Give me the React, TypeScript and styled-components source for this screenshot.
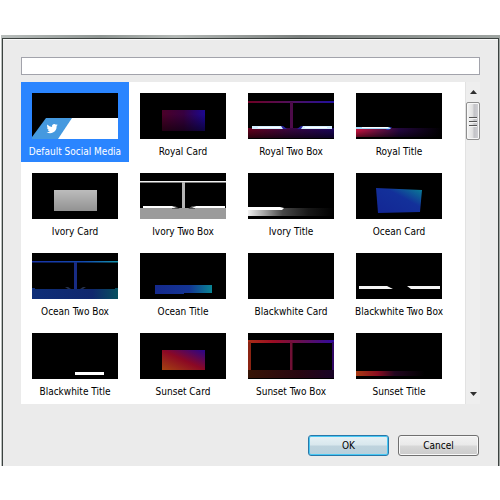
import React, { useState } from "react";
import styled, { createGlobalStyle } from "styled-components";

const GlobalStyle = createGlobalStyle`
  *, *::before, *::after { box-sizing: border-box; }
  body {
    margin: 0;
    background: #fff;
    color: #000;
    font: 10px/14px "DejaVu Sans Condensed", "Noto Sans", sans-serif;
  }
  button, input { font: inherit; color: inherit; }
`;

const Page = styled.main`
  padding: 35px 0 0 1px;
`;

const Frame = styled.div`
  padding: 3px 1px 0;
  background: linear-gradient(90deg, #b9bebc, #8f9693 20%, #b4b9b6 35%, #7b807e 60%, #9fa5a2);
`;

const Dialog = styled.form`
  display: flex;
  flex-direction: column;
  padding: 18px 18px 10px;
  border: solid #3c4240;
  border-width: 1px 1px 0;
  box-shadow: inset 0 1px #fafafa;
  background: #ebebeb;
`;

const SearchBox = styled.input`
  width: 100%;
  height: 18px;
  padding: 0 4px;
  border: 1px solid #a2a3ab;
  border-radius: 0;
  outline: none;
  background: #fff;
`;

const ListPane = styled.div`
  display: flex;
  margin-top: 7px;
  height: 322px;
`;

const TemplateGrid = styled.ul`
  flex: 1;
  display: grid;
  grid-template-columns: repeat(auto-fill, 108px);
  grid-auto-rows: 80px;
  align-content: start;
  margin: 0;
  padding: 0;
  overflow: hidden;
  list-style: none;
  background: #fff;
`;

const TemplateButton = styled.button<{ $selected: boolean }>`
  display: flex;
  flex-direction: column;
  align-items: center;
  gap: 6px;
  width: 108px;
  height: 80px;
  padding: 11px 0 0;
  border: 0;
  white-space: nowrap;
  background: ${(p) => (p.$selected ? "#2a85ff" : "transparent")};
  color: ${(p) => (p.$selected ? "#fff" : "#000")};
`;

const Preview = styled.svg`
  display: block;
  flex: none;
  width: 86px;
  height: 46px;
  background: #000;
`;

const ScrollBar = styled.div`
  display: flex;
  flex-direction: column;
  width: 15px;
  border-left: 1px solid #e2e2e2;
  background: #eeeeee;
`;

const ArrowButton = styled.button`
  display: grid;
  place-items: center;
  height: 20px;
  padding: 0;
  border: 0;
  background: transparent;
`;

const ScrollTrack = styled.div`
  flex: 1;
`;

const ScrollThumb = styled.div`
  display: grid;
  place-items: center;
  height: 38px;
  border: 1px solid #8f8f8f;
  border-radius: 2px;
  box-shadow: inset 0 0 0 1px #f8f8f8;
  background: linear-gradient(90deg, #f4f4f4, #e2e2e2 45%, #c3c3c7 60%, #d2d2d6);
`;

const Actions = styled.div`
  display: flex;
  justify-content: flex-end;
  gap: 9px;
  margin-top: 31px;
  padding-right: 1px;
`;

const DialogButton = styled.button<{ $primary?: boolean }>`
  width: 81px;
  height: 21px;
  padding: 0;
  border: 1px solid ${(p) => (p.$primary ? "#2a77a8" : "#707070")};
  border-radius: 3px;
  box-shadow: inset 0 0 0 1px ${(p) => (p.$primary ? "#48c8f4" : "#f8f8f8")};
  background: ${(p) =>
    p.$primary
      ? "linear-gradient(#e6f1f5, #d8e7ed 48%, #bed3dd 52%, #b8d0dc)"
      : "linear-gradient(#f2f2f2, #e9e9e9 48%, #d7d7d7 52%, #cbcbcb)"};
`;

type Stop = [string, string];

function Fade({ id, stops, diagonal }: { id: string; stops: Stop[]; diagonal?: boolean }) {
  return (
    <linearGradient id={id} x1="0" y1={diagonal ? "1" : "0"} x2="1" y2="0">
      {stops.map(([offset, color]) => (
        <stop key={offset} offset={offset} stopColor={color} />
      ))}
    </linearGradient>
  );
}

const templates: { name: string; art: React.ReactNode }[] = [
  {
    name: "Default Social Media",
    art: (
      <>
        <path d="M39 25H86V46H25Z" fill="#fff" />
        <path d="M14 25H40L26 46H0V44Z" fill="#4599df" />
        <g transform="translate(14.5 30) scale(.47)">
          <path
            fill="#fff"
            d="M24 4.6a10 10 0 0 1-2.8.8 5 5 0 0 0 2.1-2.7 10 10 0 0 1-3.1 1.2 4.9 4.9 0 0 0-8.4 4.5A14 14 0 0 1 1.7 3.1a4.9 4.9 0 0 0 1.5 6.6 5 5 0 0 1-2.2-.6 4.9 4.9 0 0 0 3.9 4.9 5 5 0 0 1-2.2.1 4.9 4.9 0 0 0 4.6 3.4A10 10 0 0 1 0 19.5 14 14 0 0 0 21.5 7a10 10 0 0 0 2.5-2.4Z"
          />
        </g>
      </>
    ),
  },
  {
    name: "Royal Card",
    art: (
      <>
        <Fade id="royalCard" stops={[["0", "#4b0028"], ["0.5", "#37003f"], ["1", "#1b0791"]]} />
        <linearGradient id="royalShade" x1="0" y1="0" x2="0" y2="1">
          <stop offset="0.2" stopColor="#000" stopOpacity="0" />
          <stop offset="1" stopColor="#000" stopOpacity=".55" />
        </linearGradient>
        <rect x="22" y="17" width="43" height="21" fill="url(#royalCard)" />
        <rect x="22" y="17" width="43" height="21" fill="url(#royalShade)" />
      </>
    ),
  },
  {
    name: "Royal Two Box",
    art: (
      <>
        <Fade id="royalLine" stops={[["0", "#6f0024"], ["0.5", "#50105c"], ["1", "#2010a0"]]} />
        <Fade id="royalBase" stops={[["0", "#6b001d"], ["0.5", "#3a0644"], ["1", "#1b045f"]]} />
        <linearGradient id="royalBaseShade" x1="0" y1="0" x2="0" y2="1">
          <stop offset="0" stopColor="#000" stopOpacity="0" />
          <stop offset="1" stopColor="#000" stopOpacity=".6" />
        </linearGradient>
        <rect y="8" width="86" height="2" fill="url(#royalLine)" />
        <rect x="42" y="9" width="3" height="26" fill="#4d0b49" />
        <rect y="35" width="86" height="10" fill="url(#royalBase)" />
        <rect y="35" width="86" height="10" fill="url(#royalBaseShade)" />
        <path d="M33 33H35L39 36H33ZM55 33H53L49 36H55Z" fill="#26209a" />
        <path d="M4 33H33L35 36H4ZM84 33H55L53 36H84Z" fill="#d4eeff" />
        <path d="M10 34H32V35H10ZM57 34H79V35H57Z" fill="#fff" />
      </>
    ),
  },
  {
    name: "Royal Title",
    art: (
      <>
        <Fade id="royalTitle" stops={[["0", "#c0103c"], ["0.25", "#68103f"], ["0.5", "#22063c"], ["1", "#000"]]} />
        <linearGradient id="royalTitleShade" x1="0" y1="0" x2="0" y2="1">
          <stop offset="0.3" stopColor="#000" stopOpacity="0" />
          <stop offset="1" stopColor="#000" stopOpacity=".5" />
        </linearGradient>
        <rect y="35" width="86" height="9" fill="url(#royalTitle)" />
        <rect y="35" width="86" height="9" fill="url(#royalTitleShade)" />
        <path d="M32 34H36L33 37H30Z" fill="#252da8" />
        <path d="M0 34H33L35 36H0Z" fill="#a4dafa" />
        <path d="M6 34H32V35H6Z" fill="#fff" />
      </>
    ),
  },
  {
    name: "Ivory Card",
    art: (
      <>
        <linearGradient id="ivoryCard" x1="0" y1="0" x2="0" y2="1">
          <stop offset="0" stopColor="#bcbcbc" />
          <stop offset="1" stopColor="#929292" />
        </linearGradient>
        <rect x="22" y="17" width="43" height="21" fill="url(#ivoryCard)" />
      </>
    ),
  },
  {
    name: "Ivory Two Box",
    art: (
      <>
        <path d="M0 8H86V9.5H0Z" fill="#f2f2f2" />
        <rect x="42" y="9" width="3" height="27" fill="#b5b5b5" />
        <rect y="35" width="86" height="11" fill="#9b9b9b" />
        <path d="M32 33H35L40 36H32ZM55 33H52L48 36H55Z" fill="#555" />
        <path d="M3 33H32L36 35H3ZM85 33H56L52 35H85Z" fill="#fff" />
      </>
    ),
  },
  {
    name: "Ivory Title",
    art: (
      <>
        <Fade
          id="ivoryTitle"
          stops={[["0", "#efefef"], ["0.2", "#a0a0a0"], ["0.4", "#484848"], ["0.7", "#181818"], ["1", "#000"]]}
        />
        <rect y="35" width="86" height="8" fill="url(#ivoryTitle)" />
        <path d="M0 34H32L36 35L34 37H0Z" fill="#fff" />
      </>
    ),
  },
  {
    name: "Ocean Card",
    art: (
      <>
        <Fade id="oceanCard" diagonal stops={[["0", "#132694"], ["0.6", "#13309a"], ["1", "#088395"]]} />
        <path d="M20 15L66 17L64 39L22 40Z" fill="url(#oceanCard)" />
      </>
    ),
  },
  {
    name: "Ocean Two Box",
    art: (
      <>
        <Fade id="oceanLine" stops={[["0", "#1832a6"], ["0.6", "#1248b0"], ["1", "#1494ad"]]} />
        <Fade id="oceanBase" stops={[["0", "#0e2e78"], ["0.7", "#10276d"], ["1", "#07505f"]]} />
        <rect y="8" width="86" height="1.5" fill="url(#oceanLine)" />
        <rect x="42" y="9" width="3" height="27" fill="#182c85" />
        <path d="M0 35H3V36H83V35H86V46H0Z" fill="url(#oceanBase)" />
        <path d="M33 34H36L39 36H36ZM54 34H51L48 36H51Z" fill="#263149" />
      </>
    ),
  },
  {
    name: "Ocean Title",
    art: (
      <>
        <Fade id="oceanTitle" stops={[["0", "#15298d"], ["0.6", "#133594"], ["1", "#0a8594"]]} />
        <path d="M15 32H72V40H44V41H15Z" fill="url(#oceanTitle)" />
      </>
    ),
  },
  { name: "Blackwhite Card", art: null },
  {
    name: "Blackwhite Two Box",
    art: <path d="M3 33H31L37 36H3ZM84 33H51L55 36H84Z" fill="#f5f5f5" />,
  },
  {
    name: "Blackwhite Title",
    art: <rect x="43" y="39" width="29" height="3" fill="#fff" />,
  },
  {
    name: "Sunset Card",
    art: (
      <>
        <Fade id="sunsetCard" diagonal stops={[["0", "#a44310"], ["0.5", "#8b0824"], ["1", "#27058b"]]} />
        <rect x="22" y="17" width="43" height="20" fill="url(#sunsetCard)" />
      </>
    ),
  },
  {
    name: "Sunset Two Box",
    art: (
      <>
        <Fade id="sunsetLine" stops={[["0", "#aa2d16"], ["0.3", "#9a0c24"], ["0.6", "#68104e"], ["1", "#300aa0"]]} />
        <Fade id="sunsetBase" stops={[["0", "#371405"], ["0.6", "#280611"], ["1", "#180326"]]} />
        <path d="M0 7H86V10H0Z" fill="url(#sunsetLine)" />
        <rect y="9" width="3" height="28" fill="#8b2413" />
        <rect x="42" y="9" width="2.5" height="28" fill="#701035" />
        <rect x="84" y="9" width="2" height="28" fill="#310866" />
        <rect y="37" width="86" height="8" fill="url(#sunsetBase)" />
      </>
    ),
  },
  {
    name: "Sunset Title",
    art: (
      <>
        <Fade id="sunsetTitle" stops={[["0", "#a83b13"], ["0.25", "#8a0d20"], ["0.45", "#230620"], ["0.8", "#000"]]} />
        <rect y="38" width="86" height="5" fill="url(#sunsetTitle)" />
      </>
    ),
  },
];

export default function App() {
  const [selected, setSelected] = useState("Default Social Media");
  const [query, setQuery] = useState("");
  const shown = templates.filter((t) => t.name.toLowerCase().includes(query.toLowerCase()));

  return (
    <>
      <GlobalStyle />
      <Page>
        <Frame>
          <Dialog onSubmit={(e) => e.preventDefault()}>
            <SearchBox
              type="text"
              aria-label="Filter templates"
              value={query}
              onChange={(e) => setQuery(e.target.value)}
            />
            <ListPane>
              <TemplateGrid>
                {shown.map(({ name, art }) => (
                  <li key={name}>
                    <TemplateButton
                      type="button"
                      $selected={name === selected}
                      aria-pressed={name === selected}
                      onClick={() => setSelected(name)}
                    >
                      <Preview viewBox="0 0 86 46" aria-hidden="true">
                        {art}
                      </Preview>
                      {name}
                    </TemplateButton>
                  </li>
                ))}
              </TemplateGrid>
              <ScrollBar>
                <ArrowButton type="button" aria-label="Scroll up">
                  <svg width="7" height="4" viewBox="0 0 7 4" aria-hidden="true">
                    <path d="M3.5 0L7 4H0Z" fill="#303030" />
                  </svg>
                </ArrowButton>
                <ScrollTrack>
                  <ScrollThumb>
                    <svg width="8" height="11" viewBox="0 0 8 11" aria-hidden="true">
                      <path d="M0 1.5H8M0 5.5H8M0 9.5H8" stroke="#555" />
                      <path d="M0 2.5H8M0 6.5H8M0 10.5H8" stroke="#f5f5f5" />
                    </svg>
                  </ScrollThumb>
                </ScrollTrack>
                <ArrowButton type="button" aria-label="Scroll down">
                  <svg width="7" height="4" viewBox="0 0 7 4" aria-hidden="true">
                    <path d="M0 0H7L3.5 4Z" fill="#303030" />
                  </svg>
                </ArrowButton>
              </ScrollBar>
            </ListPane>
            <Actions>
              <DialogButton type="submit" $primary>
                OK
              </DialogButton>
              <DialogButton type="button">Cancel</DialogButton>
            </Actions>
          </Dialog>
        </Frame>
      </Page>
    </>
  );
}
